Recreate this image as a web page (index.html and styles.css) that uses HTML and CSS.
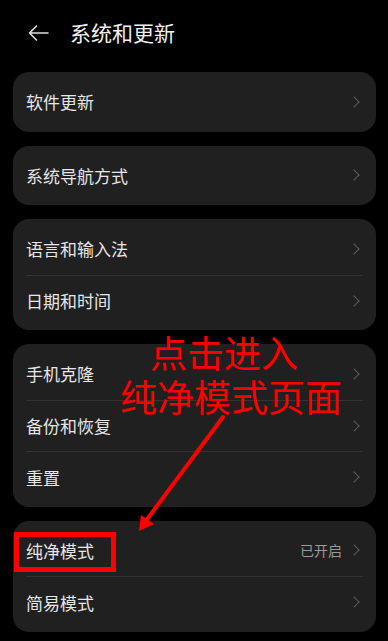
FILE: index.html
```html
<!DOCTYPE html>
<html>
    <head>
        <meta name="viewport" content="width=device-width, initial-scale=1">
        <link rel="stylesheet" href="styles.css">
    </head>
    <body>
        <div class="page">
            <!-- Header -->
            <div class="header">
                <svg class="back" width="21" height="16" viewBox="0 0 21 16">
                    <path d="M20 8H1.5M8.5 1L1.5 8l7 7" fill="none" stroke="#e0e0e0" stroke-width="1.6" stroke-linecap="round" stroke-linejoin="round"/>
                </svg>
                <span class="title">系统和更新</span>
            </div>

            <div class="card">
                <div class="row"><span class="label">软件更新</span><span class="chev"></span></div>
            </div>
            <div class="card">
                <div class="row"><span class="label">系统导航方式</span><span class="chev"></span></div>
            </div>
            <div class="card">
                <div class="row"><span class="label">语言和输入法</span><span class="chev"></span></div>
                <div class="row"><span class="label">日期和时间</span><span class="chev"></span></div>
            </div>
            <div class="card">
                <div class="row"><span class="label">手机克隆</span><span class="chev"></span></div>
                <div class="row"><span class="label">备份和恢复</span><span class="chev"></span></div>
                <div class="row"><span class="label">重置</span><span class="chev"></span></div>
            </div>
            <div class="card">
                <div class="row"><span class="label">纯净模式</span><span class="value">已开启</span><span class="chev"></span></div>
                <div class="row"><span class="label">简易模式</span><span class="chev"></span></div>
            </div>
        </div>

        <!-- Annotation overlay -->
        <div class="note">点击进入<br>纯净模式页面</div>
        <svg class="arrow" width="388" height="641" viewBox="0 0 388 641">
            <line x1="223" y1="417" x2="145" y2="522" stroke="#ff0000" stroke-width="4" stroke-linecap="round"/>
            <polygon points="139,531 141,515 154,524" fill="#ff0000"/>
        </svg>
        <div class="mark"></div>
    </body>
</html>
```

FILE: styles.css
```css
/* Base */
html, body {
    margin: 0;
    padding: 0;
    background-color: #000000;
}
body {
    width: 388px;
    height: 641px;
    overflow: hidden;
    position: relative;
    font-family: "Noto Sans CJK SC", "Noto Sans", sans-serif;
    -webkit-font-smoothing: antialiased;
}
.page {
    padding: 0 12px 0 13px;
}

/* Header */
.header {
    height: 64px;
    display: flex;
    align-items: center;
    padding-left: 15px;
    margin-bottom: 8px;
}
.back {
    display: block;
    margin-top: 2px;
}
.title {
    margin-left: 21px;
    font-size: 21px;
    color: #f0f0f0;
    line-height: 1;
}

/* Cards */
.card {
    background-color: #202020;
    border-radius: 16px;
    padding: 4px 0;
    margin-bottom: 14px;
}
.row {
    height: 51.5px;
    box-sizing: border-box;
    display: flex;
    align-items: center;
    margin: 0 13px;
    padding-right: 1px;
}
.row + .row {
    border-top: 1px solid #333333;
}
.label {
    margin-right: auto;
    font-size: 17px;
    color: #e6e6e6;
    line-height: 1;
}
.value {
    font-size: 14px;
    color: #9a9a9a;
    margin-right: 8px;
    line-height: 1;
}
.chev {
    width: 7px;
    height: 7px;
    border-top: 1.6px solid #5c5c5c;
    border-right: 1.6px solid #5c5c5c;
    transform: rotate(45deg);
    margin-right: 4px;
}

/* Annotation */
.note {
    position: absolute;
    left: 120px;
    top: 330px;
    color: #ff0000;
    font-size: 37px;
    line-height: 44px;
    text-indent: 30px;
    white-space: nowrap;
}
.arrow {
    position: absolute;
    left: 0;
    top: 0;
}
.mark {
    position: absolute;
    left: 14px;
    top: 532px;
    width: 102px;
    height: 40px;
    box-sizing: border-box;
    border: 5px solid #ff0000;
}
```
